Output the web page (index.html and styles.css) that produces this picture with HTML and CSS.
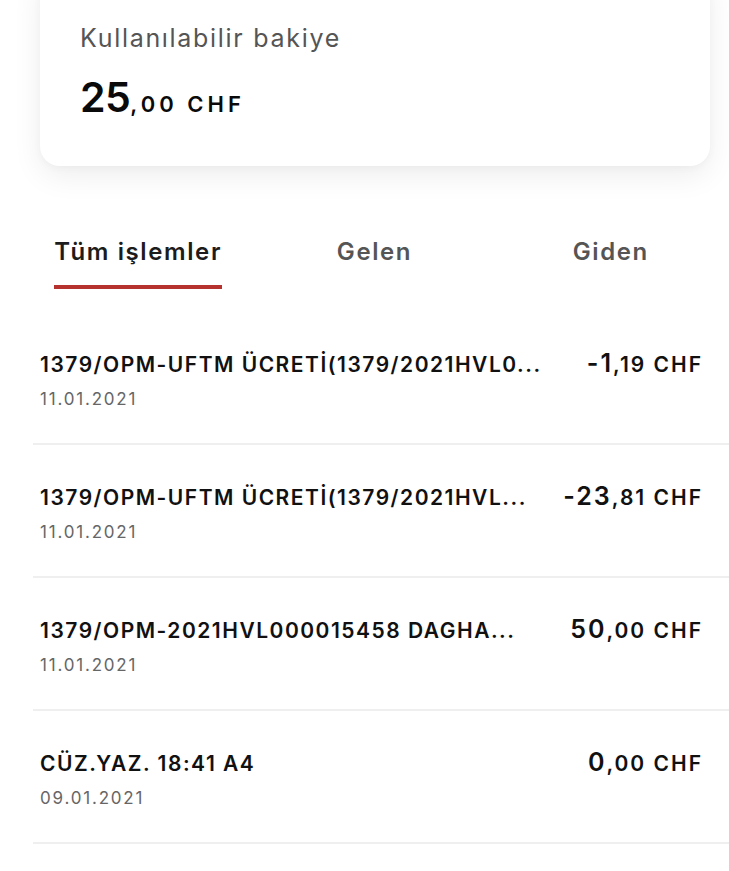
FILE: index.html
```html
<!DOCTYPE html>
<html lang="tr">
<head>
<meta charset="utf-8">
<link rel="stylesheet" href="styles.css">
</head>
<body>
<div class="page">
  <section class="card">
    <div class="card-label">Kullanılabilir bakiye</div>
    <div class="card-amount"><span class="big">25</span><span class="small">,00 CHF</span></div>
  </section>

  <nav class="tabs">
    <div class="tab active"><span class="tab-text">Tüm işlemler</span></div>
    <div class="tab"><span class="tab-text">Gelen</span></div>
    <div class="tab"><span class="tab-text">Giden</span></div>
  </nav>

  <ul class="list">
    <li class="row">
      <div class="row-main">
        <div class="row-title">1379/OPM-UFTM ÜCRETİ(1379/2021HVL0...</div>
        <div class="row-amount"><span class="big">-1</span><span class="small">,19 CHF</span></div>
      </div>
      <div class="row-date">11.01.2021</div>
    </li>
    <li class="row">
      <div class="row-main">
        <div class="row-title">1379/OPM-UFTM ÜCRETİ(1379/2021HVL...</div>
        <div class="row-amount"><span class="big">-23</span><span class="small">,81 CHF</span></div>
      </div>
      <div class="row-date">11.01.2021</div>
    </li>
    <li class="row">
      <div class="row-main">
        <div class="row-title">1379/OPM-2021HVL000015458 DAGHA...</div>
        <div class="row-amount"><span class="big">50</span><span class="small">,00 CHF</span></div>
      </div>
      <div class="row-date">11.01.2021</div>
    </li>
    <li class="row">
      <div class="row-main">
        <div class="row-title">CÜZ.YAZ. 18:41 A4</div>
        <div class="row-amount"><span class="big">0</span><span class="small">,00 CHF</span></div>
      </div>
      <div class="row-date">09.01.2021</div>
    </li>
  </ul>
</div>
</body>
</html>
```

FILE: styles.css
```css
* { box-sizing: border-box; }
html, body {
  margin: 0;
  padding: 0;
  background: #ffffff;
}
body {
  font-family: Inter, "Open Sans", "Liberation Sans", sans-serif;
  color: #111;
  width: 729px;
  height: 871px;
  overflow: hidden;
}
.page {
  display: flex;
  flex-direction: column;
}
.card {
  margin: -30px 19px 0 40px;
  height: 196px;
  padding: 52px 41px 0 40px;
  background: #fff;
  border-radius: 20px;
  box-shadow: 0 10px 30px rgba(0, 0, 0, 0.07), 0 2px 8px rgba(0, 0, 0, 0.03);
}
.card-label {
  font-size: 25px;
  font-weight: 400;
  color: #555;
  line-height: 32px;
  letter-spacing: 1.7px;
}
.card-amount {
  margin-top: 19px;
  line-height: 48px;
  color: #0a0a0a;
}
.card-amount .big {
  font-size: 41px;
  font-weight: 600;
  letter-spacing: -0.5px;
}
.card-amount .small {
  font-size: 22px;
  font-weight: 600;
  letter-spacing: 4px;
}
.tabs {
  display: grid;
  grid-template-columns: repeat(3, 1fr);
  margin: 66px 0 0 20px;
}
.tab {
  display: flex;
  justify-content: center;
}
.tab-text {
  font-size: 24px;
  font-weight: 600;
  color: #555;
  line-height: 34px;
  letter-spacing: 1.6px;
  padding: 3px 0 16px 0;
  border-bottom: 4px solid transparent;
}
.tab.active .tab-text {
  color: #1c1c1c;
  border-bottom-color: #b5322e;
}
.list {
  list-style: none;
  margin: 23px 0 0 33px;
  padding: 0;
}
.row {
  height: 133px;
  padding: 35px 26px 0 7px;
  border-bottom: 2px solid #efefef;
}
.row-main {
  display: flex;
  justify-content: space-between;
  align-items: baseline;
  line-height: 32px;
}
.row-title {
  font-size: 21px;
  font-weight: 600;
  color: #111;
  letter-spacing: 1.5px;
  white-space: nowrap;
}
.row-amount {
  white-space: nowrap;
  color: #111;
  letter-spacing: 2px;
}
.row-amount .big {
  font-size: 25px;
  font-weight: 600;
}
.row-amount .small {
  font-size: 21px;
  font-weight: 600;
}
.row-date {
  margin-top: 5px;
  font-size: 17px;
  color: #666;
  line-height: 24px;
  letter-spacing: 1.8px;
}
```
